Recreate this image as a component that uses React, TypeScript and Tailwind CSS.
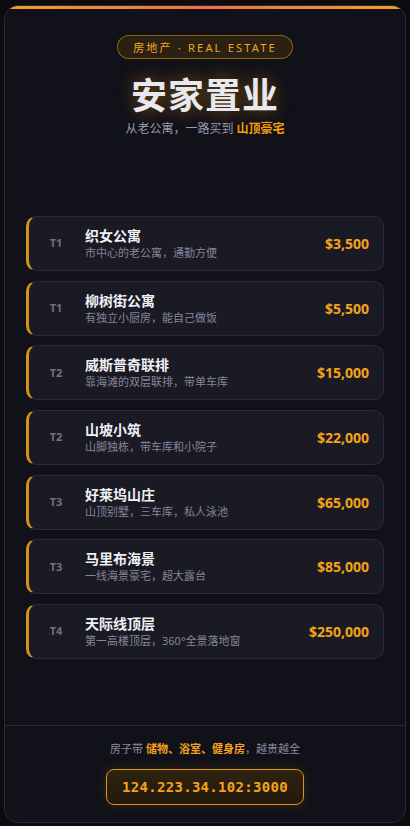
import React from "react";

const items = [
  { tier: "T1", name: "织女公寓", desc: "市中心的老公寓，通勤方便", price: "$3,500" },
  { tier: "T1", name: "柳树街公寓", desc: "有独立小厨房，能自己做饭", price: "$5,500" },
  { tier: "T2", name: "威斯普奇联排", desc: "靠海滩的双层联排，带单车库", price: "$15,000" },
  { tier: "T2", name: "山坡小筑", desc: "山脚独栋，带车库和小院子", price: "$22,000" },
  { tier: "T3", name: "好莱坞山庄", desc: "山顶别墅，三车库，私人泳池", price: "$65,000" },
  { tier: "T3", name: "马里布海景", desc: "一线海景豪宅，超大露台", price: "$85,000" },
  { tier: "T4", name: "天际线顶层", desc: "第一高楼顶层，360°全景落地窗", price: "$250,000" },
];

export default function App() {
  return (
    <div
      className="w-[410px] h-[826px] bg-[#0b0b10] pt-[5px] pl-[4px]"
      style={{ fontFamily: '"Noto Sans", "Noto Sans CJK SC", sans-serif' }}
    >
      <div className="w-[402px] h-[818px] rounded-[14px] border border-[#2a2a36] bg-[#111119] overflow-hidden flex flex-col">
        <div className="h-[3px] bg-gradient-to-r from-[#f0a020] via-[#ef7040] to-[#f0a020] shrink-0" />
        <div className="flex flex-col items-center pt-[26px]">
          <div className="h-[24px] px-[15px] rounded-full border border-[#f59e0b]/50 bg-[#2a2112] flex items-center text-[11px] tracking-[2.2px] text-[#f5a623] leading-none">
            房地产 · REAL ESTATE
          </div>
          <h1
            className="mt-[15px] text-[36px] font-bold leading-[43px] text-[#e8e8f0] tracking-[1px]"
            style={{ textShadow: "0 0 18px rgba(245,158,11,0.45)" }}
          >
            安家置业
          </h1>
          <p className="mt-[4px] text-[12px] leading-[16px] text-[#9a9aae]">
            从老公寓，一路买到 <span className="font-bold text-[#f59e0b]">山顶豪宅</span>
          </p>
        </div>
        <div className="mt-[79px] px-[21px] flex flex-col gap-[9.7px]">
          {items.map((it, i) => (
            <div
              key={i}
              className="h-[55px] rounded-[10px] border border-[#2a2a38] border-l-[3px] border-l-[#d4931a] bg-[#1a1a25] flex items-center pl-[13px] pr-[14px]"
            >
              <div className="w-[28px] text-center text-[11px] font-bold text-[#70707f]">{it.tier}</div>
              <div className="ml-[15px] flex-1 flex flex-col">
                <div className="text-[14px] font-bold leading-[18px] text-[#f0f0f5]">{it.name}</div>
                <div className="text-[11px] leading-[15px] text-[#85859a]">{it.desc}</div>
              </div>
              <div className="text-[14px] font-bold text-[#f5a21b]">{it.price}</div>
            </div>
          ))}
        </div>
        <div className="mt-auto border-t border-[#2a2a36] flex flex-col items-center pt-[15px] pb-[17px]">
          <p className="text-[11px] leading-[16px] text-[#8a8a9e]">
            房子带 <span className="font-bold text-[#f5a21b]">储物、浴室、健身房</span>，越贵越全
          </p>
          <div
            className="mt-[12px] w-[198px] h-[36px] rounded-[8px] border border-[#e0951a] flex items-center justify-center bg-gradient-to-b from-[#2e2210] to-[#241a0c] text-[14px] font-bold text-[#f5a21b] tracking-[0.3px]"
            style={{ fontFamily: '"DejaVu Sans Mono", monospace', boxShadow: "0 0 12px rgba(245,158,11,0.15)" }}
          >
            124.223.34.102:3000
          </div>
        </div>
      </div>
    </div>
  );
}
